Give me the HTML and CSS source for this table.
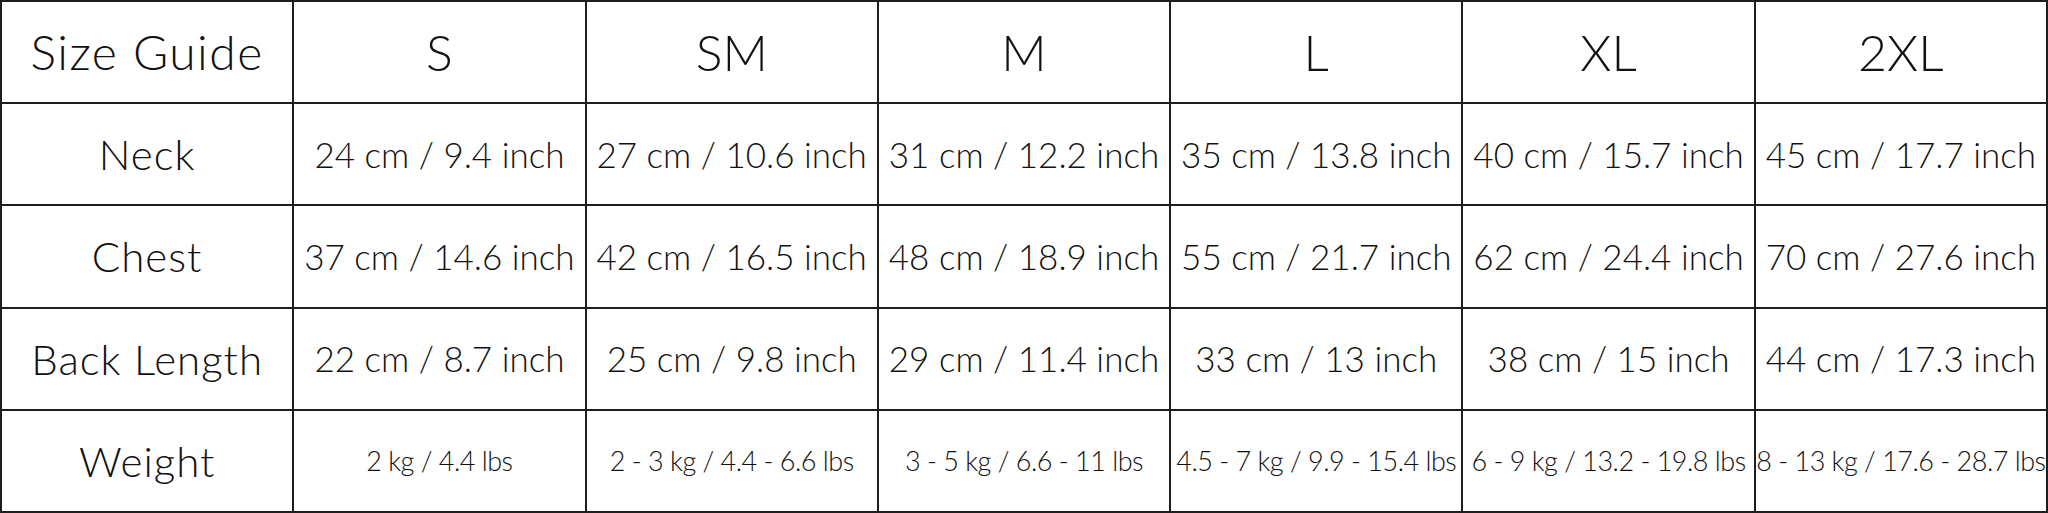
FILE: index.html
```html
<!DOCTYPE html>
<html>
<head>
<meta charset="utf-8">
<link rel="stylesheet" href="styles.css">
</head>
<body>
<table class="guide">
  <tr class="head">
    <th class="label">Size Guide</th>
    <th>S</th>
    <th>SM</th>
    <th>M</th>
    <th>L</th>
    <th>XL</th>
    <th>2XL</th>
  </tr>
  <tr>
    <td class="label">Neck</td>
    <td>24 cm / 9.4 inch</td>
    <td>27 cm / 10.6 inch</td>
    <td>31 cm / 12.2 inch</td>
    <td>35 cm / 13.8 inch</td>
    <td>40 cm / 15.7 inch</td>
    <td>45 cm / 17.7 inch</td>
  </tr>
  <tr>
    <td class="label">Chest</td>
    <td>37 cm / 14.6 inch</td>
    <td>42 cm / 16.5 inch</td>
    <td>48 cm / 18.9 inch</td>
    <td>55 cm / 21.7 inch</td>
    <td>62 cm / 24.4 inch</td>
    <td>70 cm / 27.6 inch</td>
  </tr>
  <tr>
    <td class="label">Back Length</td>
    <td>22 cm / 8.7 inch</td>
    <td>25 cm / 9.8 inch</td>
    <td>29 cm / 11.4 inch</td>
    <td>33 cm / 13 inch</td>
    <td>38 cm / 15 inch</td>
    <td>44 cm / 17.3 inch</td>
  </tr>
  <tr class="weight">
    <td class="label">Weight</td>
    <td>2 kg / 4.4 lbs</td>
    <td>2 - 3 kg / 4.4 - 6.6 lbs</td>
    <td>3 - 5 kg / 6.6 - 11 lbs</td>
    <td>4.5 - 7 kg / 9.9 - 15.4 lbs</td>
    <td>6 - 9 kg / 13.2 - 19.8 lbs</td>
    <td>8 - 13 kg / 17.6 - 28.7 lbs</td>
  </tr>
</table>
</body>
</html>
```
FILE: styles.css
```css
html, body {
  margin: 0;
  padding: 0;
  background: #ffffff;
}
.guide {
  width: 2048px;
  height: 513px;
  border-collapse: collapse;
  table-layout: fixed;
  font-family: "Lato", "Liberation Sans", sans-serif;
  font-weight: 300;
  color: #111111;
}
.guide tr {
  height: 102px;
}
.guide th, .guide td {
  border: 2px solid #1e1e1e;
  text-align: center;
  vertical-align: middle;
  padding: 0;
  white-space: nowrap;
  font-weight: 300;
  font-size: 35px;
  line-height: 1;
}
.guide .head th {
  font-size: 50px;
}
.guide td.label, .guide th.label {
  font-size: 42px;
  letter-spacing: 1px;
}
.guide .head th.label {
  font-size: 48px;
  letter-spacing: 1.5px;
}
.guide .weight td {
  font-size: 27px;
  letter-spacing: -0.5px;
}
.guide .weight td.label {
  font-size: 42px;
  letter-spacing: 1px;
}
```
